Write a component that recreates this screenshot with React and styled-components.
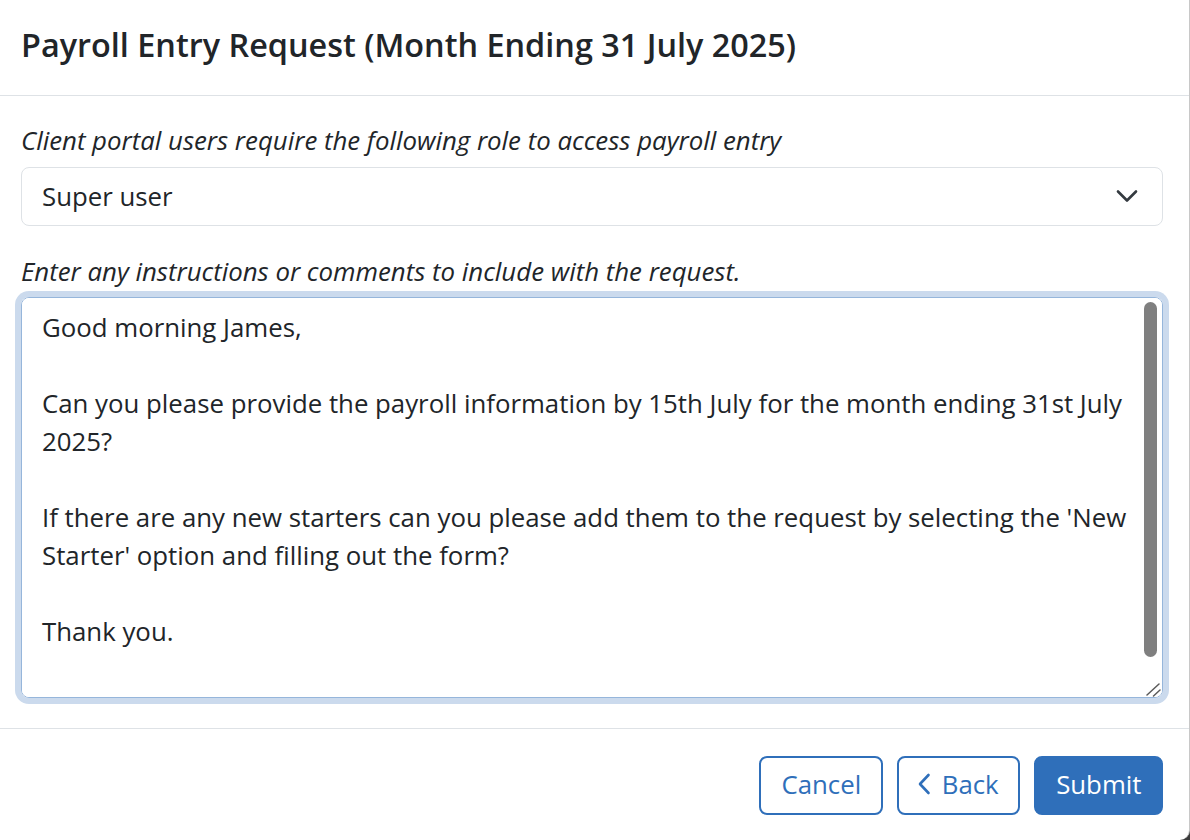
import React from "react";
import styled, { createGlobalStyle } from "styled-components";

const GlobalStyle = createGlobalStyle`
  * {
    box-sizing: border-box;
  }

  body {
    margin: 0;
    background-color: #3b3b3b;
    font-family: "Open Sans", "Liberation Sans", sans-serif;
    color: #212529;
  }
`;

const Modal = styled.div`
  width: 1190px;
  height: 840px;
  display: flex;
  flex-direction: column;
  background-color: #fff;
  border-right: 1px solid #c8c8c8;
  border-bottom-right-radius: 10px;
  overflow: hidden;
`;

const Header = styled.div`
  padding: 25px 26px 32px 21px;
  border-bottom: 1px solid #dee2e6;
`;

const Title = styled.h5`
  margin: 0;
  font-size: 32.4px;
  line-height: 38px;
  font-weight: 600;
  color: #212529;
`;

const Body = styled.div`
  flex: 1;
  display: flex;
  flex-direction: column;
  padding: 25px 26px 30px 21px;
`;

const Label = styled.label`
  display: block;
  font-size: 25.8px;
  line-height: 38.7px;
  font-style: italic;
  margin-top: ${(p) => (p.$spaced ? "26px" : "0")};
  margin-bottom: 7px;
`;

const SelectWrap = styled.div`
  position: relative;
`;

const Select = styled.select`
  width: 100%;
  height: 59px;
  appearance: none;
  padding: 0 60px 0 20px;
  font-family: inherit;
  font-size: 25.8px;
  color: #212529;
  background-color: #fff;
  border: 1px solid #dee2e6;
  border-radius: 8px;
  outline: none;
`;

const Chevron = styled.svg`
  position: absolute;
  right: 25px;
  top: 22px;
  pointer-events: none;
`;

const TextAreaWrap = styled.div`
  position: relative;
  height: 401px;
`;

const TextArea = styled.textarea`
  display: block;
  width: 100%;
  height: 100%;
  padding: 10px 22px 10px 20px;
  font-family: inherit;
  font-size: 25.8px;
  line-height: 38px;
  color: #212529;
  background-color: #fff;
  border: 1px solid #96b6db;
  border-radius: 8px;
  box-shadow: 0 0 0 6px #cbdaed;
  outline: none;
  resize: none;
  scrollbar-width: none;
`;

const ScrollThumb = styled.div`
  position: absolute;
  top: 5px;
  right: 6px;
  width: 13px;
  height: 355px;
  border-radius: 7px;
  background-color: #7f7f7f;
  pointer-events: none;
`;

const Grip = styled.svg`
  position: absolute;
  right: 2px;
  bottom: 1px;
  pointer-events: none;
`;

const Footer = styled.div`
  display: flex;
  justify-content: flex-end;
  gap: 14px;
  padding: 27px 26px 25px 21px;
  border-top: 1px solid #dee2e6;
`;

const Button = styled.button`
  height: 59px;
  display: flex;
  align-items: center;
  gap: 11px;
  padding: 0 19.5px 3px ${(p) => (p.$icon ? "18px" : "20px")};
  font-family: inherit;
  font-size: 25.8px;
  border-radius: 8px;
  border: 2px solid #2f6fba;
  color: ${(p) => (p.$primary ? "#fff" : "#2f6fba")};
  background-color: ${(p) => (p.$primary ? "#2f6fba" : "#fff")};
  cursor: pointer;
`;

const message = `Good morning James,

Can you please provide the payroll information by 15th July for the month ending 31st July 2025?

If there are any new starters can you please add them to the request by selecting the 'New Starter' option and filling out the form?

Thank you.

Kind regards,`;

export default function App() {
  return (
    <>
      <GlobalStyle />
      <Modal>
        <Header>
          <Title>Payroll Entry Request (Month Ending 31 July 2025)</Title>
        </Header>
        <Body>
          <Label htmlFor="role">
            Client portal users require the following role to access payroll entry
          </Label>
          <SelectWrap>
            <Select id="role" defaultValue="super">
              <option value="super">Super user</option>
              <option value="admin">Administrator</option>
              <option value="standard">Standard user</option>
            </Select>
            <Chevron width="22" height="15" viewBox="0 0 22 15">
              <polyline
                points="2,2.5 11,11.5 20,2.5"
                fill="none"
                stroke="#343a40"
                strokeWidth="2.6"
                strokeLinecap="round"
                strokeLinejoin="round"
              />
            </Chevron>
          </SelectWrap>
          <Label htmlFor="comments" $spaced>
            Enter any instructions or comments to include with the request.
          </Label>
          <TextAreaWrap>
            <TextArea id="comments" defaultValue={message} />
            <ScrollThumb />
            <Grip width="16" height="16" viewBox="0 0 16 16">
              <path
                d="M2 14 L14 3 M8.5 15 L15 9"
                stroke="#5a5a5a"
                strokeWidth="1.5"
                strokeLinecap="round"
              />
            </Grip>
          </TextAreaWrap>
        </Body>
        <Footer>
          <Button>Cancel</Button>
          <Button $icon>
            <svg width="14" height="22" viewBox="0 0 14 22">
              <polyline
                points="11.5,2 3,11 11.5,20"
                fill="none"
                stroke="#2f6fba"
                strokeWidth="2.6"
                strokeLinecap="round"
                strokeLinejoin="round"
              />
            </svg>
            Back
          </Button>
          <Button $primary>Submit</Button>
        </Footer>
      </Modal>
    </>
  );
}
